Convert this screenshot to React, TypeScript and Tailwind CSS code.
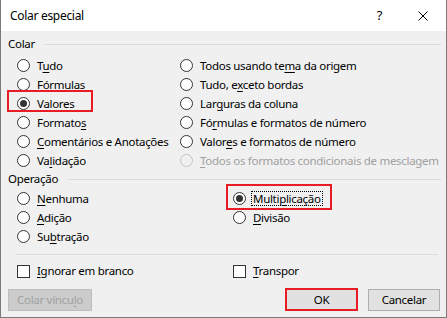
import React from 'react';

// Colar especial dialog (Excel, pt-BR)

const Radio = ({ checked, disabled }: { checked?: boolean; disabled?: boolean }) => (
  <svg width="13" height="13" viewBox="0 0 13 13" className="shrink-0">
    <circle cx="6.5" cy="6.5" r="6" fill={disabled ? '#f0f0f0' : '#ffffff'} stroke={disabled ? '#c4c4c4' : '#333333'} strokeWidth="1" />
    {checked && <circle cx="6.5" cy="6.5" r="3.5" fill="#333333" />}
  </svg>
);

const Check = () => (
  <span className="w-[13px] h-[13px] shrink-0 bg-white border border-[#333333]" />
);

interface RowProps {
  children: React.ReactNode;
  checked?: boolean;
  disabled?: boolean;
  focus?: boolean;
  box?: string; // red annotation rectangle
}

const RadioRow = ({ children, checked, disabled, focus, box }: RowProps) => (
  <div className="relative h-[19px] flex items-center gap-[7px]">
    <Radio checked={checked} disabled={disabled} />
    <span className={`whitespace-nowrap leading-none ${disabled ? 'text-[#a0a0a0]' : 'text-black'} ${focus ? 'outline outline-1 outline-dotted outline-black outline-offset-[1px]' : ''}`}>
      {children}
    </span>
    {box && <span className={`absolute border-2 border-[#e81c24] pointer-events-none ${box}`} />}
  </div>
);

const GroupLabel = ({ text, className }: { text: string; className: string }) => (
  <div className={`h-[16px] flex items-center ${className}`}>
    <span className="leading-none">{text}</span>
    <span className="flex-1 h-px bg-[#dcdcdc] ml-[10px]" />
  </div>
);

const U = ({ children }: { children: React.ReactNode }) => (
  <u className="underline underline-offset-[2px] decoration-1">{children}</u>
);

export default function App() {
  return (
    <div className="w-[447px] h-[318px] flex flex-col bg-[#f0f0f0] text-[11.5px] tracking-[-0.3px] text-black font-['Noto_Sans',sans-serif] select-none">
      {/* title bar */}
      <div className="h-[31px] shrink-0 bg-white flex items-center pl-[9px] border-x border-[#7a7a7a]">
        <span className="text-[12px] leading-none">Colar especial</span>
        <span className="ml-auto mr-[36px] text-[13px] leading-none">?</span>
        <svg width="10" height="10" viewBox="0 0 10 10" className="mr-[18px]">
          <path d="M0.5 0.5L9.5 9.5M9.5 0.5L0.5 9.5" stroke="#000" strokeWidth="1" />
        </svg>
      </div>

      <div className="flex-1 flex flex-col pl-[7px] pr-[5px] border-x border-b border-[#7a7a7a]">
        <GroupLabel text="Colar" className="mt-[5px]" />
        <div className="mt-[4px] pl-[9px] grid grid-cols-[163px_1fr]">
          <div className="flex flex-col">
            <RadioRow>T<U>u</U>do</RadioRow>
            <RadioRow><U>F</U>órmulas</RadioRow>
            <RadioRow checked box="-left-[10px] -top-[4px] w-[86px] h-[22px]"><U>V</U>alores</RadioRow>
            <RadioRow>Formato<U>s</U></RadioRow>
            <RadioRow><U>C</U>omentários e Anotações</RadioRow>
            <RadioRow>Va<U>l</U>idação</RadioRow>
          </div>
          <div className="flex flex-col">
            <RadioRow>Todos usando te<U>m</U>a da origem</RadioRow>
            <RadioRow>Tudo, e<U>x</U>ceto bordas</RadioRow>
            <RadioRow>Lar<U>g</U>uras da coluna</RadioRow>
            <RadioRow>Fó<U>r</U>mulas e formatos de número</RadioRow>
            <RadioRow>Valor<U>e</U>s e formatos de número</RadioRow>
            <RadioRow disabled><U>T</U>odos os formatos condicionais de mesclagem</RadioRow>
          </div>
        </div>

        <GroupLabel text="Operação" className="mt-[1px]" />
        <div className="mt-[2px] pl-[9px] grid grid-cols-[216px_1fr]">
          <div className="flex flex-col">
            <RadioRow><U>N</U>enhuma</RadioRow>
            <RadioRow><U>A</U>dição</RadioRow>
            <RadioRow>Su<U>b</U>tração</RadioRow>
          </div>
          <div className="flex flex-col">
            <RadioRow checked focus box="-left-[7px] -top-[5px] w-[106px] h-[26px]">Multi<U>p</U>licação</RadioRow>
            <RadioRow><U>D</U>ivisão</RadioRow>
          </div>
        </div>

        <div className="mt-[8px] ml-[8px] mr-[3px] h-px bg-[#dcdcdc]" />

        <div className="mt-[6px] h-[20px] pl-[9px] grid grid-cols-[216px_1fr] items-center">
          <div className="flex items-center gap-[7px]">
            <Check />
            <span className="leading-none"><U>I</U>gnorar em branco</span>
          </div>
          <div className="flex items-center gap-[7px]">
            <Check />
            <span className="leading-none"><U>T</U>ranspor</span>
          </div>
        </div>

        <div className="mt-[7px] flex items-center pr-[1px]">
          <button className="w-[84px] h-[22px] bg-[#cccccc] border border-[#bfbfbf] text-[#a0a0a0] leading-none">
            Colar víncu<U>l</U>o
          </button>
          <button className="ml-auto w-[73px] h-[23px] bg-[#e1e1e1] border-2 border-[#e81c24] text-black leading-none">
            OK
          </button>
          <button className="ml-[10px] w-[72px] h-[22px] bg-[#e1e1e1] border border-[#adadad] text-black leading-none">
            Cancelar
          </button>
        </div>
      </div>
    </div>
  );
}
